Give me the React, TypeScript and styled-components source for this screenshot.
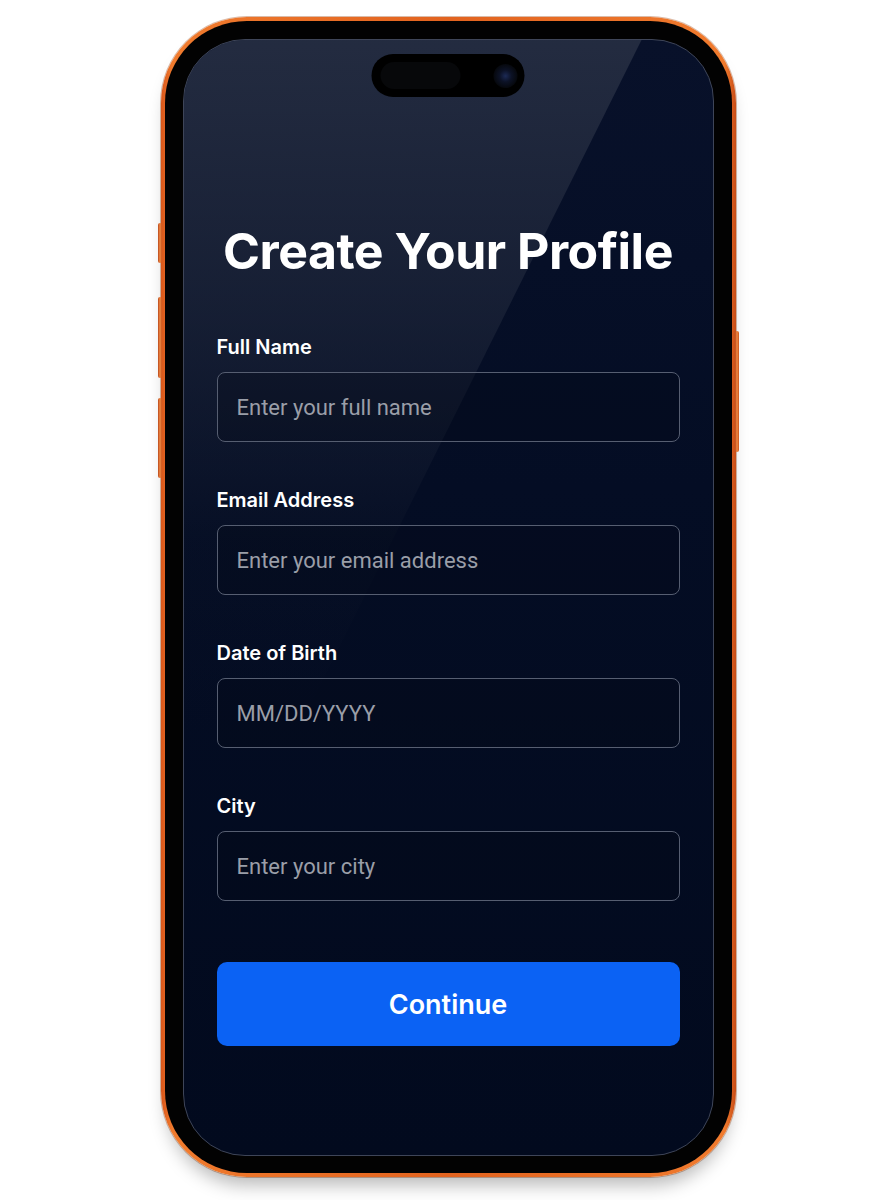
import React from "react"
import styled, { createGlobalStyle } from "styled-components"

const GlobalStyle = createGlobalStyle`
  html, body {
    margin: 0;
    padding: 0;
    background: #ffffff;
  }
  body {
    font-family: Inter, "Noto Sans", sans-serif;
  }
`

const Page = styled.div`
  width: 896px;
  height: 1200px;
  padding-top: 17px;
  box-sizing: border-box;
  display: flex;
  justify-content: center;
  align-items: flex-start;
`

const Phone = styled.div`
  position: relative;
  width: 575px;
  height: 1160px;
  box-sizing: border-box;
  padding: 4px;
  border-radius: 86px;
  background: linear-gradient(90deg, #d9561a 0%, #f07b2e 2%, #e2631f 50%, #f07b2e 98%, #c84c16 100%);
  box-shadow: 0 14px 18px -6px rgba(0, 0, 0, 0.28), 0 0 0 1px rgba(150, 60, 10, 0.35);
`

const SideButton = styled.div<{ side: "left" | "right"; top: number; height: number }>`
  position: absolute;
  ${(p) => (p.side === "left" ? "left: -3px;" : "right: -3px;")}
  top: ${(p) => p.top}px;
  width: 4px;
  height: ${(p) => p.height}px;
  border-radius: 2px;
  background: linear-gradient(90deg, #b8461a, #f08a44, #c9531c);
`

const Bezel = styled.div`
  width: 100%;
  height: 100%;
  box-sizing: border-box;
  padding: 18px 18px 17px;
  border-radius: 82px;
  background: #020202;
`

const Screen = styled.div`
  position: relative;
  width: 100%;
  height: 100%;
  box-sizing: border-box;
  border-radius: 62px;
  overflow: hidden;
  border: 1px solid #3e4558;
  background: linear-gradient(180deg, #08112a 0%, #040d24 40%, #020a1e 100%);
  padding: 181px 33px 0;
  display: flex;
  flex-direction: column;
`

const Glare = styled.div`
  position: absolute;
  inset: 0;
  pointer-events: none;
  clip-path: polygon(0 0, 458px 0, 0 920px);
  background: linear-gradient(180deg, rgba(40, 48, 68, 0.85) 0%, rgba(30, 38, 58, 0.65) 25%, rgba(14, 22, 42, 0.25) 45%, rgba(5, 12, 30, 0) 62%);
`

const Island = styled.div`
  position: absolute;
  top: 14px;
  left: 50%;
  transform: translateX(-50%);
  width: 153px;
  height: 43px;
  border-radius: 22px;
  background: #000;
  display: flex;
  align-items: center;
  justify-content: space-between;
  padding: 0 7px 0 9px;
  box-sizing: border-box;
`

const Sensor = styled.div`
  width: 80px;
  height: 27px;
  border-radius: 14px;
  background: #07080a;
`

const Camera = styled.div`
  width: 24px;
  height: 24px;
  border-radius: 50%;
  background: radial-gradient(circle, #1c2a55 0%, #0c1226 35%, #06080d 70%);
`

const Title = styled.h1`
  position: relative;
  margin: 0 0 54px;
  text-align: center;
  font-family: Inter, "Noto Sans", sans-serif;
  font-weight: 700;
  font-size: 50px;
  line-height: 60px;
  letter-spacing: -0.5px;
  color: #ffffff;
`

const Form = styled.form`
  position: relative;
  display: flex;
  flex-direction: column;
  gap: 46px;
`

const Field = styled.label`
  display: flex;
  flex-direction: column;
  gap: 13px;
`

const LabelText = styled.span`
  font-family: Inter, "Noto Sans", sans-serif;
  font-weight: 600;
  font-size: 20px;
  line-height: 24px;
  color: #ffffff;
`

const Input = styled.input`
  height: 70px;
  box-sizing: border-box;
  border: 1.5px solid #565e71;
  border-radius: 8px;
  background: rgba(2, 6, 18, 0.25);
  padding: 0 19px;
  font-family: Roboto, "Noto Sans", sans-serif;
  font-size: 22px;
  color: #ffffff;
  outline: none;

  &::placeholder {
    color: #9a9ea8;
  }
`

const Button = styled.button`
  margin-top: 15px;
  height: 84px;
  border: none;
  border-radius: 10px;
  background: #0b62f4;
  color: #ffffff;
  font-family: Inter, "Noto Sans", sans-serif;
  font-weight: 600;
  font-size: 27px;
`

const fields = [
  { label: "Full Name", placeholder: "Enter your full name" },
  { label: "Email Address", placeholder: "Enter your email address" },
  { label: "Date of Birth", placeholder: "MM/DD/YYYY" },
  { label: "City", placeholder: "Enter your city" }
]

const App: React.FC = () => {
  return (
    <>
      <GlobalStyle />
      <Page>
        <Phone>
          <SideButton side="left" top={206} height={40} />
          <SideButton side="left" top={280} height={81} />
          <SideButton side="left" top={381} height={80} />
          <SideButton side="right" top={314} height={121} />
          <Bezel>
            <Screen>
              <Glare />
              <Island>
                <Sensor />
                <Camera />
              </Island>
              <Title>Create Your Profile</Title>
              <Form onSubmit={(e) => e.preventDefault()}>
                {fields.map((f) => (
                  <Field key={f.label}>
                    <LabelText>{f.label}</LabelText>
                    <Input placeholder={f.placeholder} />
                  </Field>
                ))}
                <Button type="submit">Continue</Button>
              </Form>
            </Screen>
          </Bezel>
        </Phone>
      </Page>
    </>
  )
}

export default App
